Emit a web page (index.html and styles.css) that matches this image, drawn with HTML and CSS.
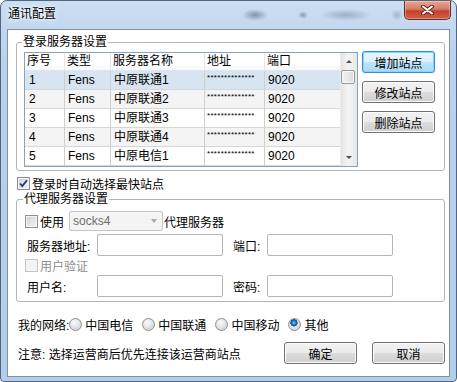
FILE: index.html
```html
<!DOCTYPE html>
<html lang="zh-CN">
<head>
    <meta charset="UTF-8">
    <title>通讯配置</title>
    <link rel="stylesheet" href="styles.css">
</head>
<body>
    <div class="window">
        <div class="titlebar">
            <span class="title">通讯配置</span>
            <button class="close-btn">
                <svg width="13" height="10" viewBox="0 0 13 10">
                    <path d="M2 1.5 L11 8.5 M11 1.5 L2 8.5" stroke="#5a2018" stroke-width="3.8" stroke-linecap="round"/>
                    <path d="M2 1.5 L11 8.5 M11 1.5 L2 8.5" stroke="#fff" stroke-width="2" stroke-linecap="round"/>
                </svg>
            </button>
        </div>

        <div class="client">
            <fieldset class="group">
                <legend>登录服务器设置</legend>
                <div class="server-body">
                    <div class="listview">
                        <div class="grid">
                            <div class="row head">
                                <span>序号</span><span>类型</span><span>服务器名称</span><span>地址</span><span>端口</span>
                            </div>
                            <div class="row selected">
                                <span>1</span><span>Fens</span><span>中原联通1</span><span class="mask">**************</span><span>9020</span>
                            </div>
                            <div class="row alt">
                                <span>2</span><span>Fens</span><span>中原联通2</span><span class="mask">**************</span><span>9020</span>
                            </div>
                            <div class="row">
                                <span>3</span><span>Fens</span><span>中原联通3</span><span class="mask">**************</span><span>9020</span>
                            </div>
                            <div class="row alt">
                                <span>4</span><span>Fens</span><span>中原联通4</span><span class="mask">**************</span><span>9020</span>
                            </div>
                            <div class="row">
                                <span>5</span><span>Fens</span><span>中原电信1</span><span class="mask">**************</span><span>9020</span>
                            </div>
                        </div>
                        <div class="vscroll">
                            <span class="arrow-btn"><span class="tri up"></span></span>
                            <span class="thumb"></span>
                            <span class="track"></span>
                            <span class="arrow-btn"><span class="tri down"></span></span>
                        </div>
                    </div>
                    <div class="side-buttons">
                        <button class="btn default">增加站点</button>
                        <button class="btn">修改站点</button>
                        <button class="btn">删除站点</button>
                    </div>
                </div>
            </fieldset>

            <label class="check-row auto">
                <span class="box">
                    <svg width="11" height="11" viewBox="0 0 11 11">
                        <path d="M2 5.5 L4.3 8 L9 2.2" fill="none" stroke="#23367a" stroke-width="1.8"/>
                    </svg>
                </span>
                登录时自动选择最快站点
            </label>

            <fieldset class="group proxy">
                <legend>代理服务器设置</legend>
                <div class="form-row first">
                    <span class="box"></span>
                    <span class="use-label">使用</span>
                    <span class="combo disabled">socks4<span class="combo-arrow"></span></span>
                    <span>代理服务器</span>
                </div>
                <div class="form-row">
                    <span class="field-label">服务器地址:</span>
                    <input class="edit" type="text">
                    <span class="field-label second">端口:</span>
                    <input class="edit" type="text">
                </div>
                <div class="form-row check-line">
                    <span class="box disabled"></span>
                    <span class="muted">用户验证</span>
                </div>
                <div class="form-row last">
                    <span class="field-label">用户名:</span>
                    <input class="edit" type="text">
                    <span class="field-label second">密码:</span>
                    <input class="edit" type="text">
                </div>
            </fieldset>

            <div class="network">
                <span>我的网络:</span>
                <span class="radio-item"><span class="radio"></span>中国电信</span>
                <span class="radio-item"><span class="radio"></span>中国联通</span>
                <span class="radio-item"><span class="radio"></span>中国移动</span>
                <span class="radio-item"><span class="radio on"></span>其他</span>
            </div>

            <div class="footer">
                <span class="note">注意: 选择运营商后优先连接该运营商站点</span>
                <button class="btn ok">确定</button>
                <button class="btn">取消</button>
            </div>
        </div>
    </div>
</body>
</html>
```

FILE: styles.css
```css
* {
    box-sizing: border-box;
}

body {
    margin: 0;
    background: #fff;
    font-family: "Liberation Sans", "Noto Sans CJK SC", sans-serif;
    font-size: 12px;
    color: #000;
}

.window {
    width: 457px;
    height: 382px;
    border: 1px solid #55667c;
    border-radius: 7px 7px 4px 4px;
    background: linear-gradient(#cbdef3, #b9d1eb 60px, #b4cde9);
    display: flex;
    flex-direction: column;
    overflow: hidden;
}

.titlebar {
    height: 28px;
    display: flex;
    align-items: flex-start;
    background:
        radial-gradient(ellipse 13px 6px at 254px 14px, rgba(70, 90, 115, 0.55), rgba(70, 90, 115, 0)),
        radial-gradient(ellipse 5px 4px at 302px 14px, rgba(70, 90, 115, 0.5), rgba(70, 90, 115, 0)),
        radial-gradient(ellipse 26px 6px at 345px 14px, rgba(90, 110, 135, 0.4), rgba(90, 110, 135, 0)),
        radial-gradient(ellipse 6px 6px at 396px 14px, rgba(90, 110, 135, 0.35), rgba(90, 110, 135, 0));
}

.title {
    padding: 6px 0 0 7px;
    line-height: 14px;
    text-shadow: 0 0 6px #fff, 0 0 3px #fff;
}

.close-btn {
    margin-left: auto;
    margin-right: 5px;
    width: 47px;
    height: 19px;
    padding: 0;
    border: 1px solid #6d2a20;
    border-top: none;
    border-radius: 0 0 5px 5px;
    background: linear-gradient(#e8a797, #d67b68 45%, #c5432b 55%, #d15d48);
    box-shadow: inset 0 0 0 1px rgba(255, 255, 255, 0.3);
    display: flex;
    align-items: center;
    justify-content: center;
}

.client {
    margin: 0 6px;
    height: 348px;
    border: 1px solid #7f91a8;
    background: #fff;
}

/* group boxes */

.group {
    margin: 5px 4px 0 8px;
    padding: 3px 7px 3px 7px;
    border: 1px solid #b4b4b4;
    border-radius: 3px;
    min-width: 0;
}

.group legend {
    padding: 0 1px;
    margin-left: -2px;
    line-height: 14px;
}

.server-body {
    display: flex;
    align-items: flex-start;
}

/* list view */

.listview {
    width: 334px;
    height: 115px;
    border: 1px solid #8aa3bd;
    display: flex;
}

.grid {
    width: 315px;
}

.row {
    display: grid;
    grid-template-columns: 40px 46px 94px 60px 75px;
    height: 19px;
}

.row span {
    padding-left: 3px;
    border-right: 1px solid #cfcfcf;
    border-bottom: 1px solid #d6d6d6;
    line-height: 18px;
    white-space: nowrap;
    overflow: hidden;
}

.row span:first-child {
    padding-left: 4px;
}

.row span:last-child {
    border-right: none;
}

.row.head {
    height: 18px;
    background: linear-gradient(#fff, #fff 50%, #f5f7f9);
}

.row.head span {
    line-height: 17px;
    padding-left: 2px;
    border-right-color: #e3e5e8;
    border-bottom-color: #e3e5e8;
}

.row.alt {
    background: #f4f4f4;
}

.row.selected {
    background: #d7e4f1;
}

.row .mask {
    font-size: 8px;
    letter-spacing: 0.3px;
    line-height: 14px;
    padding-left: 2px;
}

.vscroll {
    width: 17px;
    display: flex;
    flex-direction: column;
    background: linear-gradient(90deg, #e4e4e4, #f3f3f3 40%, #f0f0f0 70%, #e6e6e6);
    border-left: 1px solid #ececec;
}

.arrow-btn {
    height: 17px;
    display: flex;
    align-items: center;
    justify-content: center;
}

.tri {
    width: 0;
    height: 0;
    border-left: 3px solid transparent;
    border-right: 3px solid transparent;
}

.tri.up {
    border-bottom: 3px solid #4d4d4d;
}

.tri.down {
    border-top: 3px solid #4d4d4d;
}

.thumb {
    width: 14px;
    height: 14px;
    margin-left: 0;
    border: 1px solid #979797;
    border-radius: 2px;
    background: linear-gradient(90deg, #f3f3f3, #e9e9e9 50%, #d9d9d9);
    box-shadow: inset 0 0 0 1px #fafafa;
}

.track {
    flex: 1;
}

/* buttons */

.side-buttons {
    margin: -1px 0 0 4px;
    display: flex;
    flex-direction: column;
    gap: 8px;
}

.btn {
    width: 73px;
    height: 22px;
    padding: 0;
    font: inherit;
    color: #000;
    border: 1px solid #707070;
    border-radius: 3px;
    background: linear-gradient(#f2f2f2, #ebebeb 50%, #dddddd 50%, #cfcfcf);
    box-shadow: inset 0 0 0 1px #fcfcfc;
}

.btn.default {
    border-color: #3c8ccf;
    background: linear-gradient(#eaf6fd, #d9f0fc 50%, #bee6fd 50%, #a7d9f5);
    box-shadow: inset 0 0 0 1px #8cd3fb, 0 0 1px #7fc6ee;
}

/* check boxes, radios and fields */

.check-row {
    display: flex;
    align-items: center;
}

.check-row.auto {
    height: 16px;
    margin: 4px 0 0 9px;
}

.box {
    width: 13px;
    height: 13px;
    margin-right: 2px;
    flex: none;
    border: 1px solid #8e8f8f;
    background: linear-gradient(135deg, #cbcfd5, #f6f6f6);
    box-shadow: inset 0 0 0 1px #f4f4f4;
    display: flex;
    align-items: center;
    justify-content: center;
}

.box.disabled {
    border-color: #c4c4c4;
    background: #f4f4f4;
    box-shadow: none;
}

.proxy {
    margin-top: 1px;
    padding: 5px 8px 4px 8px;
}

.form-row {
    display: flex;
    align-items: center;
    height: 22px;
    margin-top: 3px;
}

.form-row.first {
    height: 20px;
    margin-top: 0;
}

.form-row.check-line {
    height: 16px;
    margin-top: 1px;
}

.form-row.last {
    margin-top: 2px;
}

.use-label {
    width: 29px;
}

.combo {
    width: 94px;
    height: 20px;
    margin-right: 1px;
    padding-left: 3px;
    border: 1px solid #c3c5c8;
    border-radius: 2px;
    background: #f4f4f4;
    color: #6d6d6d;
    display: flex;
    align-items: center;
    justify-content: space-between;
}

.combo-arrow {
    margin-right: 5px;
    border-left: 3.5px solid transparent;
    border-right: 3.5px solid transparent;
    border-top: 4px solid #a8a8a8;
}

.field-label {
    width: 72px;
    padding-left: 2px;
}

.field-label.second {
    width: 34px;
    margin-left: 10px;
    padding-left: 0;
}

.edit {
    width: 126px;
    height: 22px;
    margin: 0;
    border: 1px solid #b3b5b9;
    border-radius: 2px;
    background: #fff;
}

.muted {
    color: #8d8d8d;
}

.network {
    height: 16px;
    margin-top: 14px;
    padding-left: 10px;
    display: flex;
    align-items: center;
}

.radio-item {
    display: flex;
    align-items: center;
    margin-right: 9px;
}

.radio {
    width: 13px;
    height: 13px;
    margin-right: 3px;
    border: 1px solid #8e8f8f;
    border-radius: 50%;
    background: radial-gradient(circle at 40% 35%, #fbfbfb, #d3d6db 75%);
}

.radio.on {
    background:
        radial-gradient(circle at 45% 35%, #9fd3f7 0, #2a7fd0 1.6px, #0b4f98 3.4px, rgba(11, 79, 152, 0) 3.9px),
        radial-gradient(circle at 40% 35%, #fbfbfb, #d3d6db 75%);
}

.footer {
    height: 22px;
    margin-top: 10px;
    padding: 0 4px 0 10px;
    display: flex;
    align-items: center;
}

.note {
    flex: 1;
}

.btn.ok {
    margin-right: 15px;
}
```
